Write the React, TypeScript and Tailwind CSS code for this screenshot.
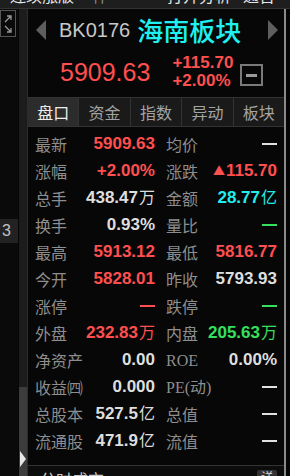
import React from 'react';

const CJK = "font-['Noto_Sans_CJK_SC',sans-serif]";
const NUM = "font-['Liberation_Sans','Noto_Sans_CJK_SC',sans-serif]";

const RED = 'text-[#ff4f4f]';
const GREEN = 'text-[#35e05c]';
const WHITE = 'text-[#dedede]';
const CYAN = 'text-[#22eeee]';

function Dash({ color }: { color: string }) {
  return <span className={`inline-block w-[15px] h-[2px] ${color}`}></span>;
}

function Num({ v, unit, color }: { v: string; unit?: string; color: string }) {
  return (
    <span className={`flex items-baseline ${color}`}>
      <span className={`${NUM} font-bold text-[17px]`}>{v}</span>
      {unit && <span className={`${CJK} text-[16px] ml-[1px]`}>{unit}</span>}
    </span>
  );
}

type Row = [React.ReactNode, React.ReactNode, React.ReactNode, React.ReactNode];

const rows: Row[] = [
  ['最新', <Num v="5909.63" color={RED} />, '均价', <Dash color="bg-[#e0e0e0]" />],
  ['涨幅', <Num v="+2.00%" color={RED} />, '涨跌', (
    <span className={`flex items-center ${RED}`}>
      <span className="text-[12px] mr-[1px]">▲</span>
      <span className={`${NUM} font-bold text-[17px]`}>115.70</span>
    </span>
  )],
  ['总手', <Num v="438.47" unit="万" color={WHITE} />, '金额', <Num v="28.77" unit="亿" color={CYAN} />],
  ['换手', <Num v="0.93%" color={WHITE} />, '量比', <Dash color="bg-[#35e05c]" />],
  ['最高', <Num v="5913.12" color={RED} />, '最低', <Num v="5816.77" color={RED} />],
  ['今开', <Num v="5828.01" color={RED} />, '昨收', <Num v="5793.93" color={WHITE} />],
  ['涨停', <Dash color="bg-[#ff4f4f]" />, '跌停', <Dash color="bg-[#35e05c]" />],
  ['外盘', <Num v="232.83" unit="万" color={RED} />, '内盘', <Num v="205.63" unit="万" color={GREEN} />],
  ['净资产', <Num v="0.00" color={WHITE} />, <span className="font-['Liberation_Serif',serif]">ROE</span>, <Num v="0.00%" color={WHITE} />],
  ['收益㈣', <Num v="0.000" color={WHITE} />, <span className="font-['Liberation_Serif','Noto_Sans_CJK_SC',serif]">PE(动)</span>, <Dash color="bg-[#e0e0e0]" />],
  ['总股本', <Num v="527.5" unit="亿" color={WHITE} />, '总值', <Dash color="bg-[#e0e0e0]" />],
  ['流通股', <Num v="471.9" unit="亿" color={WHITE} />, '流值', <Dash color="bg-[#e0e0e0]" />],
];

const tabs = ['盘口', '资金', '指数', '异动', '板块'];

export default function App() {
  return (
    <div className={`w-[290px] h-[476px] bg-[#0a0a0a] overflow-hidden flex flex-col ${CJK}`}>
      {/* top strip, cut off */}
      <div className="h-[9px] bg-[#1e1e1e] border-b border-[#333] overflow-hidden relative shrink-0">
        <div className="flex text-[16px] text-[#e8e8e8] -mt-[15px] leading-[20px]">
          <span className="ml-[10px]">连续涨版</span>
          <span className="ml-[18px] text-[#888]">什</span>
          <span className="ml-[59px]">打开分析</span>
          <span className="ml-[12px]">通告</span>
        </div>
      </div>

      <div className="flex flex-1 min-h-0">
        {/* left column */}
        <div className="w-[18px] flex flex-col">
          <div className="mt-[1px] w-[16px] h-[27px] border border-[#555] flex items-center justify-center">
            <svg width="12" height="22" viewBox="0 0 12 22" fill="none" stroke="#9a9a9a" strokeWidth="1.3">
              <path d="M3 9 L9 3 M5 3 H9 V7" />
              <path d="M3 13 L9 19 M9 15 V19 H5" />
            </svg>
          </div>
          <div className="mt-[182px] h-[24px] bg-[#222] text-[#c0c0c0] text-[16px] leading-[24px] pl-[2px] font-['Liberation_Sans',sans-serif]">3</div>
        </div>

        {/* scroll track */}
        <div className="w-[10px] flex flex-col border-r border-[#2c2c2c] border-l border-l-[#060606]">
          <div className="h-[378px] bg-[#1c1c1c]"></div>
          <div className="flex-1 bg-[#3c3c3c] flex flex-col items-start">
            <svg className="mt-[64px] ml-[1px]" width="6" height="16" viewBox="0 0 6 16">
              <path d="M0 0 L6 8 L0 16 Z" fill="#e8e8e8" />
            </svg>
          </div>
        </div>

        {/* main panel */}
        <div className="w-[256px] flex flex-col bg-[#070707]">
          {/* header */}
          <div className="h-[88px] flex flex-col">
            <div className="mt-[1px] h-[40px] flex items-center pl-[8px] pr-[6px]">
              <svg width="10" height="20" viewBox="0 0 10 20">
                <path d="M10 0 L0 10 L10 20 Z" fill="#5e5e5e" />
              </svg>
              <span className={`${NUM} ml-[13px] text-[20px] text-[#c8c8c8]`}>BK0176</span>
              <span className={`${CJK} ml-[7px] text-[26px] leading-[30px] font-medium text-[#1ff0f0]`}>海南板块</span>
              <span className="flex-1"></span>
              <svg width="10" height="20" viewBox="0 0 10 20">
                <path d="M0 0 L10 10 L0 20 Z" fill="#5e5e5e" />
              </svg>
            </div>
            <div className="h-[44px] flex items-center">
              <span className={`${NUM} ml-[32px] text-[25px] leading-[30px] ${RED}`}>5909.63</span>
              <div className={`${NUM} ml-[22px] flex flex-col font-bold text-[17px] leading-[18px] ${RED}`}>
                <span>+115.70</span>
                <span>+2.00%</span>
              </div>
              <div className="ml-[7px] mt-[6px] w-[23px] h-[22px] border-2 border-[#7a7a7a] flex items-center justify-center">
                <span className="w-[11px] h-[3px] bg-[#9a9a9a]"></span>
              </div>
            </div>
          </div>

          {/* tabs */}
          <div className="h-[30px] flex border-y border-[#333] bg-[#1a1a1a]">
            {tabs.map((t, i) => (
              <div
                key={t}
                className={`flex-1 flex items-center justify-center text-[16px] ${i > 0 ? 'border-l border-[#333]' : ''} ${i === 0 ? 'bg-[#2c2c2c] text-[#ececec]' : 'text-[#a4a4a4]'}`}
              >
                {t}
              </div>
            ))}
          </div>

          {/* data rows */}
          <div className="pt-[3px] flex flex-col">
            {rows.map((r, i) => (
              <div key={i} className="h-[27px] flex items-center pl-[7px] pr-[7px] text-[16px] text-[#8e8e8e]">
                <div className="w-[120px] flex items-center justify-between">
                  <span>{r[0]}</span>
                  {r[1]}
                </div>
                <div className="ml-[11px] flex-1 flex items-center justify-between">
                  <span>{r[2]}</span>
                  {r[3]}
                </div>
              </div>
            ))}
          </div>

          <div className="flex-1"></div>

          {/* bottom section, cut off */}
          <div className="h-[11px] border-t border-[#333] bg-[#0c0c0c] overflow-hidden flex items-start">
            <span className="ml-[12px] mt-[3px] text-[16px] leading-[20px] text-[#c8c8c8]">分时成交</span>
            <span className="flex-1"></span>
            <span className="mr-[7px] mt-[4px] w-[20px] h-[12px] bg-[#333] rounded-[2px] text-[12px] leading-[14px] text-[#ddd] text-center">详</span>
          </div>
        </div>

        {/* right edge */}
        <div className="w-[2px] bg-[#8a8a8a]"></div>
        <div className="w-[4px] bg-[#050505]"></div>
      </div>
    </div>
  );
}
